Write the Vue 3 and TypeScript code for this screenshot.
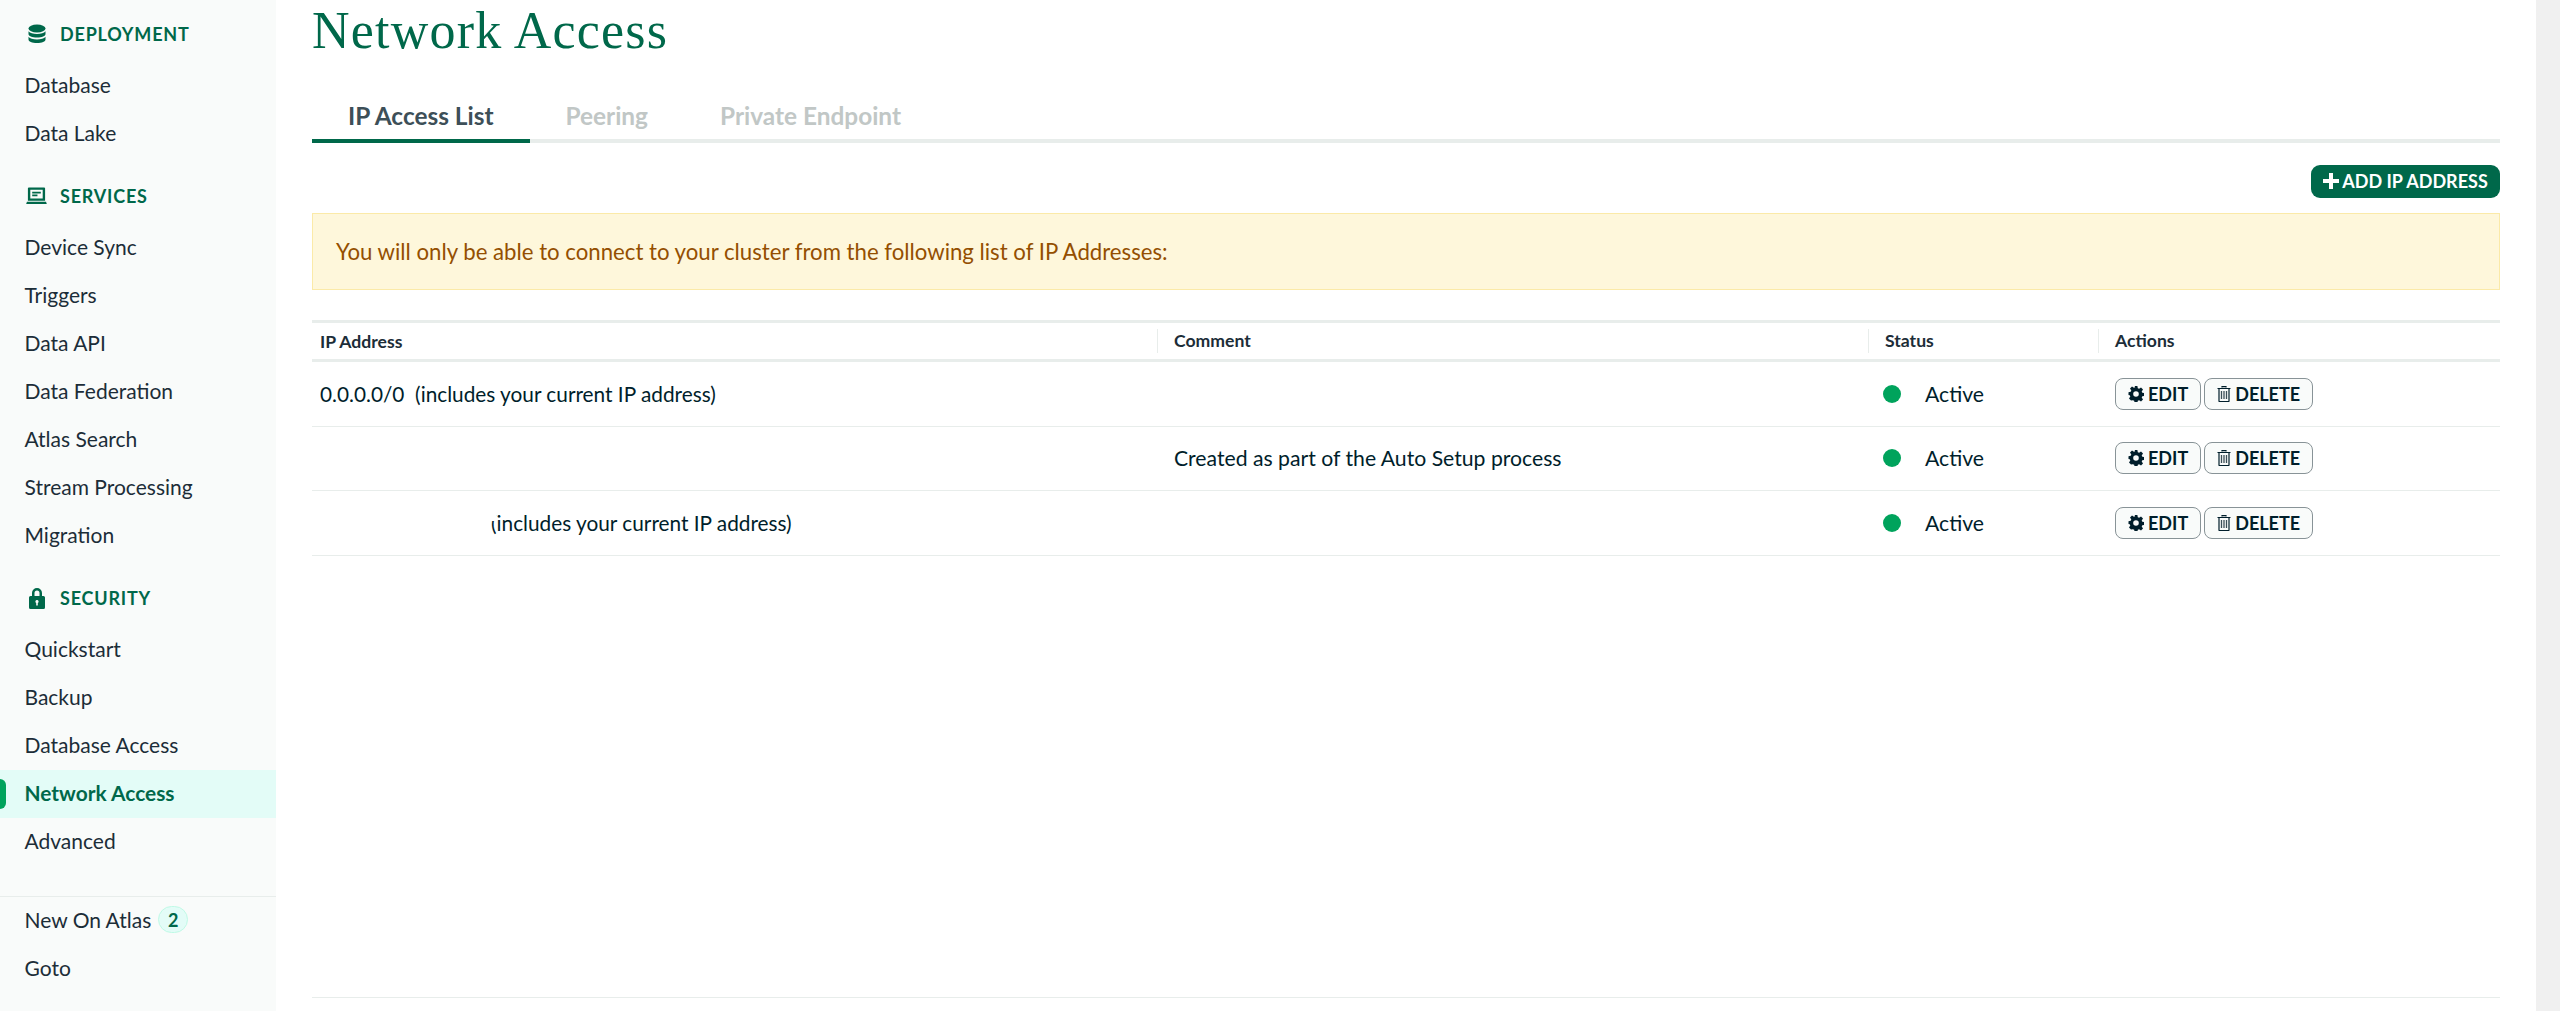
<script setup lang="ts">
interface Item { label: string; active?: boolean; badge?: number }
interface Section { title: string; icon: 'db' | 'laptop' | 'lock'; items: Item[] }

const sections: Section[] = [
  { title: 'DEPLOYMENT', icon: 'db', items: [{ label: 'Database' }, { label: 'Data Lake' }] },
  {
    title: 'SERVICES',
    icon: 'laptop',
    items: ['Device Sync', 'Triggers', 'Data API', 'Data Federation', 'Atlas Search', 'Stream Processing', 'Migration'].map((label) => ({ label })),
  },
  {
    title: 'SECURITY',
    icon: 'lock',
    items: [
      { label: 'Quickstart' },
      { label: 'Backup' },
      { label: 'Database Access' },
      { label: 'Network Access', active: true },
      { label: 'Advanced' },
    ],
  },
]

const rows = [
  { ip: '0.0.0.0/0', note: '(includes your current IP address)', comment: '', hidden: false },
  { ip: '', note: '', comment: 'Created as part of the Auto Setup process', hidden: true },
  { ip: '', note: '(includes your current IP address)', comment: '', hidden: true },
]
</script>

<template>
  <div class="page">
    <aside class="side">
      <section v-for="s in sections" :key="s.title" class="group">
        <h3 class="group-title">
          <span class="group-icon">
            <svg v-if="s.icon === 'db'" width="18" height="20" viewBox="0 0 18 20">
              <ellipse cx="9" cy="4.5" rx="8.5" ry="4" fill="#00684a" />
              <path d="M.5 7.2C2 9 5 10 9 10s7-1 8.500-2.800V10c0 2-3.500 3.500-8.500 3.500S.5 12 .5 10z" fill="#00684a" />
              <path d="M.5 12.700C2 14.500 5 15.500 9 15.500s7-1 8.500-2.800V15.500c0 2-3.500 3.500-8.500 3.500S.5 17.500.5 15.500z" fill="#00684a" />
            </svg>
            <svg v-else-if="s.icon === 'laptop'" width="21" height="18" viewBox="0 0 22 18">
              <path fill-rule="evenodd" d="M3 0h16a1 1 0 0 1 1 1v13H2V1a1 1 0 0 1 1-1zm1.500 2.500v9h13v-9z" fill="#00684a" />
              <path d="M6.500 4.500h9v1.800h-9zM6.500 7.500h5.500v1.800H6.500z" fill="#00684a" />
              <path d="M1 15h20l.8 2.400H.2z" fill="#00684a" />
            </svg>
            <svg v-else width="16" height="22" viewBox="0 0 16 22">
              <path fill-rule="evenodd" d="M3 9V6a5 5 0 0 1 10 0v3h1.500a1.500 1.500 0 0 1 1.500 1.500v10a1.500 1.500 0 0 1-1.500 1.500h-13A1.500 1.500 0 0 1 0 20.500v-10A1.500 1.500 0 0 1 1.500 9zm2.500 0h5V6a2.500 2.500 0 0 0-5 0zM8 13a1.600 1.600 0 0 0-.8 3v2.500h1.600V16A1.600 1.600 0 0 0 8 13z" fill="#00684a" />
            </svg>
          </span>
          {{ s.title }}
        </h3>
        <a v-for="it in s.items" :key="it.label" class="nav" :class="{ active: it.active }">{{ it.label }}</a>
      </section>
      <div class="side-foot">
        <a class="nav">New On Atlas<span class="badge">2</span></a>
        <a class="nav">Goto</a>
      </div>
    </aside>

    <main class="main">
      <h1 class="title">Network Access</h1>
      <nav class="tabs">
        <a class="tab on">IP Access List</a>
        <a class="tab">Peering</a>
        <a class="tab">Private Endpoint</a>
      </nav>
      <div class="toolbar">
        <button class="add"><svg width="16" height="16" viewBox="0 0 16 16"><path d="M6 0h4v6h6v4h-6v6H6v-6H0V6h6z" fill="#fff" /></svg>ADD IP ADDRESS</button>
      </div>
      <div class="notice">You will only be able to connect to your cluster from the following list of IP Addresses:</div>

      <div class="table">
        <div class="tr th">
          <div class="c c1">IP Address</div>
          <div class="c c2"><span>Comment</span></div>
          <div class="c c3"><span>Status</span></div>
          <div class="c c4"><span>Actions</span></div>
        </div>
        <div v-for="(r, i) in rows" :key="i" class="tr td">
          <div class="c c1">
            <span v-if="!r.hidden">{{ r.ip }}&nbsp;&nbsp;{{ r.note }}</span>
            <span v-else class="masked">{{ r.note }}</span>
          </div>
          <div class="c c2"><span>{{ r.comment }}</span></div>
          <div class="c c3"><i class="dot"></i>Active</div>
          <div class="c c4 acts">
            <button class="btn">
              <svg width="16" height="16" viewBox="0 0 16 16"><path fill-rule="evenodd" d="M6.600 0h2.800l.4 2.200 1.300.6L13 1.500l2 2-1.300 1.900.6 1.300 2.200.4v2.800l-2.200.4-.6 1.300 1.300 1.900-2 2-1.900-1.300-1.300.6-.4 2.200H6.600l-.4-2.200-1.300-.6L3 14.500l-2-2 1.300-1.900-.6-1.300L.5 9V6.200l2.200-.4.6-1.300L2 2.500l2-2 1.900 1.300 1.300-.6zM8 5.200a2.800 2.800 0 1 0 0 5.600 2.800 2.800 0 0 0 0-5.600z" fill="#001e2b" /></svg>EDIT
            </button>
            <button class="btn">
              <svg width="14" height="16" viewBox="0 0 14 16"><path d="M5 1.500V.6h4v.9M.5 2.500h13M2 2.500V15a.5.500 0 0 0 .5.500h9a.5.500 0 0 0 .5-.5V2.500" fill="none" stroke="#001e2b" stroke-width="1.200" /><path d="M4.500 5v8M7 5v8M9.500 5v8" stroke="#3d4f58" stroke-width="1.300" /></svg>DELETE
            </button>
          </div>
        </div>
      </div>
      <div class="bottom"></div>
    </main>
    <div class="rail"></div>
  </div>
</template>

<style>
html, body { margin: 0; background: #fff; }
</style>

<style scoped>
.page { display: flex; width: 2560px; height: 1011px; overflow: hidden; font-family: Lato, "Open Sans", sans-serif; color: #001e2b; }
.side { width: 276px; flex: none; background: #f9fbfa; box-sizing: border-box; padding-top: 10px; display: flex; flex-direction: column; }
.group { padding-bottom: 14px; }
.group-title { margin: 0 0 4px; height: 48px; display: flex; align-items: center; padding-left: 26px; font-size: 18px; font-weight: 700; letter-spacing: 0.8px; color: #00684a; }
.group-icon { width: 21px; padding-right: 13px; display: flex; justify-content: center; }
.group-icon svg { flex: none; }
.nav { display: flex; align-items: center; height: 48px; box-sizing: border-box; padding: 0 0 3px 24.500px; font-size: 21px; color: #1c2d38; position: relative; }
.nav.active { background: #e3fcf7; color: #00684a; font-weight: 700; font-size: 20.900px; }
.nav.active::before { content: ""; position: absolute; left: 0; top: 9px; width: 6px; height: 30px; border-radius: 0 6px 6px 0; background: #00a35c; }
.side-foot { margin-top: 16px; border-top: 1px solid #e8edeb; }
.badge { margin-left: 7px; width: 30px; height: 27px; border-radius: 14px; border: 1px solid #c0fae6; background: #e3fcf7; color: #00684a; font-size: 18px; font-weight: 700; display: flex; align-items: center; justify-content: center; box-sizing: border-box; }
.main { flex: none; width: 2188px; margin-left: 36px; }
.title { margin: 0; height: 64px; font: 400 52px/62px "Liberation Serif", serif; letter-spacing: 1.200px; color: #00684a; }
.tabs { display: flex; height: 79px; box-sizing: border-box; border-bottom: 4px solid #e8edeb; }
.tab { padding: 0 36px 8px; display: flex; align-items: flex-end; line-height: 30px; font-size: 24.400px; font-weight: 700; color: #c1c7c6; margin-bottom: -4px; border-bottom: 4px solid transparent; }
.tab.on { color: #3d4f58; border-color: #00684a; }
.toolbar { display: flex; justify-content: flex-end; margin-top: 22px; }
.add { height: 33px; width: 189px; border: 0; border-radius: 9px; background: #00684a; color: #fff; font: 700 18px/30px Lato, sans-serif; display: flex; align-items: center; justify-content: center; gap: 3px; padding: 0 0 2px; }
.notice { margin-top: 15px; height: 77px; box-sizing: border-box; background: #fef7db; border: 1px solid #fbeaa8; color: #944f01; font-size: 22.200px; display: flex; align-items: center; padding-left: 23px; }
.table { margin-top: 30px; border-top: 3px solid #e8edeb; }
.tr { display: grid; grid-template-columns: 845px 711px 230px 402px; }
.th { height: 36px; border-bottom: 3px solid #e8edeb; font-size: 17.600px; font-weight: 700; color: #1c2d38; }
.th .c { display: flex; align-items: center; }
.th .c2 span, .th .c3 span, .th .c4 span { border-left: 1px solid #e8edeb; height: 24px; padding-left: 16px; line-height: 24px; }
.th .c1 { padding-left: 8px; }
.td { height: 64.600px; box-sizing: border-box; border-bottom: 1px solid #e8edeb; font-size: 20.800px; color: #001e2b; }
.td .c { display: flex; align-items: center; }
.td .c1 { padding-left: 8px; }
.td .c2 { padding-left: 17px; font-size: 21.200px; }
.td .c3 { padding-left: 17px; font-size: 21.200px; }
.td .c4 { padding-left: 17px; }
.masked { margin-left: 171px; position: relative; }
.masked:not(:empty)::before { content: ""; position: absolute; left: -1px; top: 3px; width: 6px; height: 8px; background: #fff; }
.dot { width: 18px; height: 18px; border-radius: 50%; background: #00a35c; margin-right: 24px; margin-left: -2px; }
.acts { gap: 3px; }
.btn { height: 32px; padding: 0 12px; box-sizing: border-box; border: 1px solid #889397; border-radius: 8px; background: #f9fbfa; color: #001e2b; font: 700 18px Lato, sans-serif; display: flex; align-items: center; gap: 4px; }
.bottom { margin-top: 441px; border-top: 1px solid #e8edeb; }
.rail { width: 24px; flex: none; margin-left: 36px; background: #f0f0f0; }
</style>
